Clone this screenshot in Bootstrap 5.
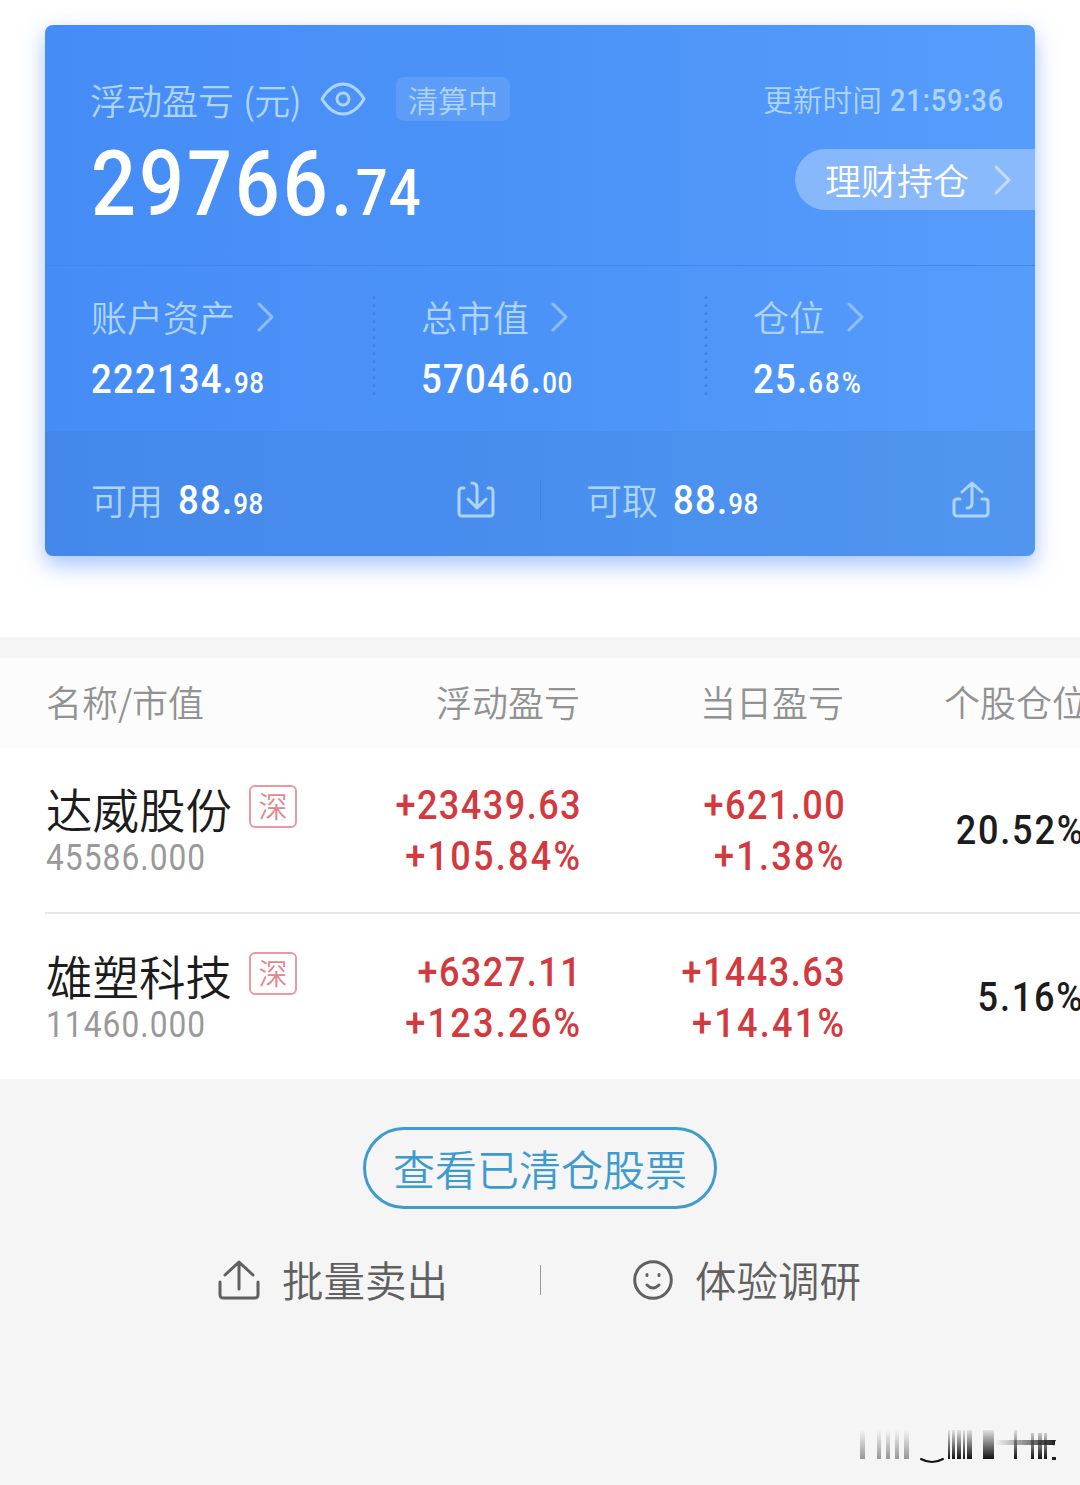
<!DOCTYPE html>
<html lang="zh-CN">
<head>
<meta charset="utf-8">
<meta name="viewport" content="width=device-width, initial-scale=1">
<title>持仓</title>
<link href="https://cdn.jsdelivr.net/npm/bootstrap@5.3.0/dist/css/bootstrap.min.css" rel="stylesheet">
<style>
body{background:#f5f5f5;font-family:"Noto Sans CJK SC",sans-serif;font-weight:350;font-size:36px;line-height:1;height:1485px;overflow:hidden;color:#1c1c1c}
svg{display:block;flex:none;fill:none;stroke:currentColor;stroke-linecap:round;stroke-linejoin:round}
.cjk{line-height:1;white-space:nowrap;margin-top:-2px}
.num{font-family:Roboto,sans-serif;font-weight:500;font-size:41.5px;letter-spacing:.033em;line-height:1;white-space:nowrap;display:inline-block;transform:scaleX(.88);transform-origin:left center}
.num-end{transform-origin:right center;margin-right:-2px}
.num .dec{font-size:.71em;letter-spacing:.02em}
.num .dec-pct{letter-spacing:.075em}
.top-area{height:637px;padding:25px 45px 0}
.asset-card{height:531px;border-radius:8px;color:#fff;background:linear-gradient(90deg,#468cf6,#4c93f8 50%,#569cfb);box-shadow:0 9px 22px rgba(80,135,255,.5)}
.soft{color:#add5ff}
.summary{height:240px;padding:52px 0 0 45px}
.title-line{height:44px;padding-right:33px}
.title-line .cjk{margin-top:0}
.unit{margin-left:9px;letter-spacing:-.6px}
.eye{margin-left:19px}
.tag{width:114px;height:44px;border-radius:8px;background:rgba(255,255,255,.1);font-size:30px;margin-left:30px}
.fs-time{font-size:29.7px}
.fs-time .num{font-size:31px;letter-spacing:.03em;width:112px;margin-top:3px}
.total{font-size:90px;letter-spacing:.037em;margin:-9px 0 0 1px}
.wealth{width:240px;height:61px;border-radius:31px 0 0 31px;background:rgba(255,255,255,.31);padding:0 23px 0 30px}
.metrics{height:166px;border-top:1px solid #4287ee;padding-top:29px}
.metric{width:328px;flex:none;padding:5px 0 0 46px;height:101px}
.metric + .metric{width:332px;padding-left:48px;background:radial-gradient(circle,#3b7fe0 1.2px,transparent 1.7px) -2px -1.5px/6px 8px repeat-y}
.metric .num{margin-top:24px}
.metric .chev{margin-left:22px}
.chev{color:#8fbffd}
.funds{height:125px;background:rgba(60,120,190,.18);border-radius:0 0 8px 8px;padding-top:12px}
.fund{height:40px;padding:0 45px 0 46px;width:495px}
.fund + .fund{border-left:1px solid #4283e0;padding:0 45px}
.fund .num{margin-left:15px}
.band{height:21px}
.table-top{height:90px;background:#fcfcfc;color:#929292;padding:0 0 4px 46px}
.holding{height:165px;padding-left:46px;background:#fff}
.rule{height:2px;background:#e6e6e6;margin:-1px 0 0 45px;position:relative}
.rule + .holding{padding-top:2px}
.c-name{width:314px}.c-float{width:220px}.c-day{width:264px}.c-pos{width:244px}
.stock-name{font-size:46.5px;margin-top:0}
.market{width:48px;height:43px;border:2px solid #e79aa2;border-radius:6px;color:#e08890;font-size:29px;margin:-4px 0 0 17px}
.worth{font-size:36px;color:#999;font-weight:400;margin-top:9px;display:block;width:160px}
.gain{color:#d23a40;font-size:41px;letter-spacing:.04em}
.gain + .gain{margin-top:10px;letter-spacing:.062em}
.pos{font-size:41px;color:#1c1c1c;letter-spacing:.05em;margin-right:3px}
.holds{background:#fff}
.btn-cleared{width:354px;height:82px;border:3px solid #409bcd;border-radius:41px;color:#409bcd;font-size:42px;font-weight:350;padding:2px 0 0}
.bottom-links{height:44px;margin-top:49px;padding-right:1px;font-size:41.5px;color:#606060}
.bottom-links .cjk{margin-top:0}
.sep{width:1px;height:30px;background:#999;margin:0 92px}
.link-text{margin-left:22px}
.mark-bars{top:1425px;left:855px;stroke:none}
.mark-bars .smile{stroke:#111;stroke-width:2}
</style>
</head>
<body>
<section class="top-area bg-white">
  <div class="asset-card">
    <div class="summary">
      <div class="title-line d-flex align-items-center">
        <span class="cjk soft">浮动盈亏</span><span class="cjk soft unit">(元)</span>
        <svg class="soft eye" width="46" height="34" viewBox="0 0 46 34" stroke-width="3"><path d="M2 17C8 7 15 2 23 2s15 5 21 15C38 27 31 32 23 32S8 27 2 17Z"/><circle cx="23" cy="17" r="6"/></svg>
        <span class="tag soft d-flex align-items-center justify-content-center"><span class="cjk">清算中</span></span>
        <span class="fs-time soft ms-auto d-flex align-items-center gap-2"><span class="cjk">更新时间</span><span class="num">21:59:36</span></span>
      </div>
      <div class="d-flex justify-content-between align-items-start" style="padding-top:28px">
        <div class="num total">29766.<span class="dec">74</span></div>
        <div class="wealth d-flex align-items-center justify-content-between"><span class="cjk">理财持仓</span>
          <svg class="opacity-50" width="18" height="30" viewBox="0 0 18 30" stroke-width="3"><path d="M2 2l13 13L2 28"/></svg></div>
      </div>
    </div>
    <div class="metrics d-flex">
      <div class="metric"><div class="d-flex align-items-center"><span class="cjk soft">账户资产</span><svg class="chev" width="18" height="30" viewBox="0 0 18 30" stroke-width="3"><path d="M2 2l13 13L2 28"/></svg></div><div class="num">222134.<span class="dec">98</span></div></div>
      <div class="metric"><div class="d-flex align-items-center"><span class="cjk soft">总市值</span><svg class="chev" width="18" height="30" viewBox="0 0 18 30" stroke-width="3"><path d="M2 2l13 13L2 28"/></svg></div><div class="num">57046.<span class="dec">00</span></div></div>
      <div class="metric"><div class="d-flex align-items-center"><span class="cjk soft">仓位</span><svg class="chev" width="18" height="30" viewBox="0 0 18 30" stroke-width="3"><path d="M2 2l13 13L2 28"/></svg></div><div class="num">25.<span class="dec dec-pct">68%</span></div></div>
    </div>
    <div class="funds d-flex align-items-center">
      <div class="fund d-flex align-items-center"><span class="cjk soft">可用</span><span class="num">88.<span class="dec">98</span></span>
        <svg class="soft ms-auto" width="38" height="38" viewBox="0 0 38 38" stroke-width="3"><path d="M7 7H5a3 3 0 0 0-3 3v22a3 3 0 0 0 3 3h28a3 3 0 0 0 3-3V10a3 3 0 0 0-3-3h-2M15 2c3 0 5 1 5 5v19M11 18l9 9 9-9"/></svg></div>
      <div class="fund d-flex align-items-center"><span class="cjk soft">可取</span><span class="num">88.<span class="dec">98</span></span>
        <svg class="soft ms-auto" width="38" height="38" viewBox="0 0 38 38" stroke-width="3"><path d="M8 18H5a3 3 0 0 0-3 3v11a3 3 0 0 0 3 3h28a3 3 0 0 0 3-3V21a3 3 0 0 0-3-3h-3M15 27c3 0 5-1 5-5V2M10 11l10-9 10 9"/></svg></div>
    </div>
  </div>
</section>
<div class="band"></div>
<main class="holds">
  <div class="table-top d-flex align-items-center overflow-hidden">
    <span class="c-name flex-shrink-0"><span class="cjk">名称/市值</span></span><span class="c-float flex-shrink-0 text-end"><span class="cjk">浮动盈亏</span></span><span class="c-day flex-shrink-0 text-end"><span class="cjk">当日盈亏</span></span><span class="c-pos flex-shrink-0 text-end"><span class="cjk">个股仓位</span></span>
  </div>
  <div class="holding d-flex align-items-center overflow-hidden">
    <div class="c-name flex-shrink-0"><div class="d-flex align-items-center"><span class="cjk stock-name">达威股份</span><span class="market d-flex align-items-center justify-content-center"><span class="cjk">深</span></span></div><div class="num worth">45586.000</div></div>
    <div class="c-float flex-shrink-0 d-flex flex-column align-items-end"><span class="num num-end gain">+23439.63</span><span class="num num-end gain">+105.84%</span></div>
    <div class="c-day flex-shrink-0 d-flex flex-column align-items-end"><span class="num num-end gain">+621.00</span><span class="num num-end gain">+1.38%</span></div>
    <div class="c-pos flex-shrink-0 text-end"><span class="num num-end pos">20.52%</span></div>
  </div>
  <div class="rule"></div>
  <div class="holding d-flex align-items-center overflow-hidden">
    <div class="c-name flex-shrink-0"><div class="d-flex align-items-center"><span class="cjk stock-name">雄塑科技</span><span class="market d-flex align-items-center justify-content-center"><span class="cjk">深</span></span></div><div class="num worth">11460.000</div></div>
    <div class="c-float flex-shrink-0 d-flex flex-column align-items-end"><span class="num num-end gain">+6327.11</span><span class="num num-end gain">+123.26%</span></div>
    <div class="c-day flex-shrink-0 d-flex flex-column align-items-end"><span class="num num-end gain">+1443.63</span><span class="num num-end gain">+14.41%</span></div>
    <div class="c-pos flex-shrink-0 text-end"><span class="num num-end pos">5.16%</span></div>
  </div>
</main>
<footer style="padding-top:48px">
  <div class="d-flex justify-content-center"><button class="btn btn-cleared d-flex align-items-center justify-content-center"><span class="cjk">查看已清仓股票</span></button></div>
  <div class="bottom-links d-flex justify-content-center align-items-center">
    <svg width="42" height="40" viewBox="0 0 42 40" stroke-width="3"><path d="M2 22v13a3 3 0 0 0 3 3h32a3 3 0 0 0 3-3V22M21 29V3M7 15L21 2l14 13"/></svg>
    <span class="cjk link-text">批量卖出</span>
    <span class="sep"></span>
    <svg width="40" height="40" viewBox="0 0 40 40" stroke-width="3"><circle cx="20" cy="20" r="18.3"/><path d="M14 14.500v1M26 14.500v1M14 25q6 6 12 0"/></svg>
    <span class="cjk link-text">体验调研</span>
  </div>
</footer>
<svg class="mark-bars position-absolute" width="210" height="45" viewBox="0 0 210 45">
  <defs>
    <linearGradient id="g1" x1="0" y1="0" x2="0" y2="1"><stop offset="0" stop-color="#777" stop-opacity="0"/><stop offset="1" stop-color="#777" stop-opacity=".75"/></linearGradient>
    <linearGradient id="g2" x1="0" y1="0" x2="0" y2="1"><stop offset="0" stop-color="#111" stop-opacity=".08"/><stop offset="1" stop-color="#111"/></linearGradient>
    <linearGradient id="g3" x1="0" y1="0" x2="1" y2="0"><stop offset="0" stop-color="#333" stop-opacity="0"/><stop offset="1" stop-color="#222"/></linearGradient>
  </defs>
  <path fill="url(#g1)" d="M5 5h5v29H5zM22 5h4v29h-4zM31 5h4v29h-4zM40 5h4v29h-4zM49 5h5v29h-5z"/>
  <path class="smile" d="M66 34q11 6 22 0"/>
  <path fill="url(#g2)" d="M93 5h2v29h-2zM97 5h3v29h-3zM102 5h4v29h-4zM108 5h2v29h-2zM112 5h5v29h-5zM128 5h11v29h-11zM159 5h3v29h-3zM176 8h3v26h-3zM183 8h4v26h-4zM189 8h3v26h-3z"/>
  <path fill="url(#g3)" d="M140 15h60v5h-60z"/><path fill="#222" d="M198 15h3l-3 6zM197 32h4v3h-4z"/>
</svg>
<script src="https://cdn.jsdelivr.net/npm/bootstrap@5.3.0/dist/js/bootstrap.bundle.min.js"></script>
</body>
</html>
